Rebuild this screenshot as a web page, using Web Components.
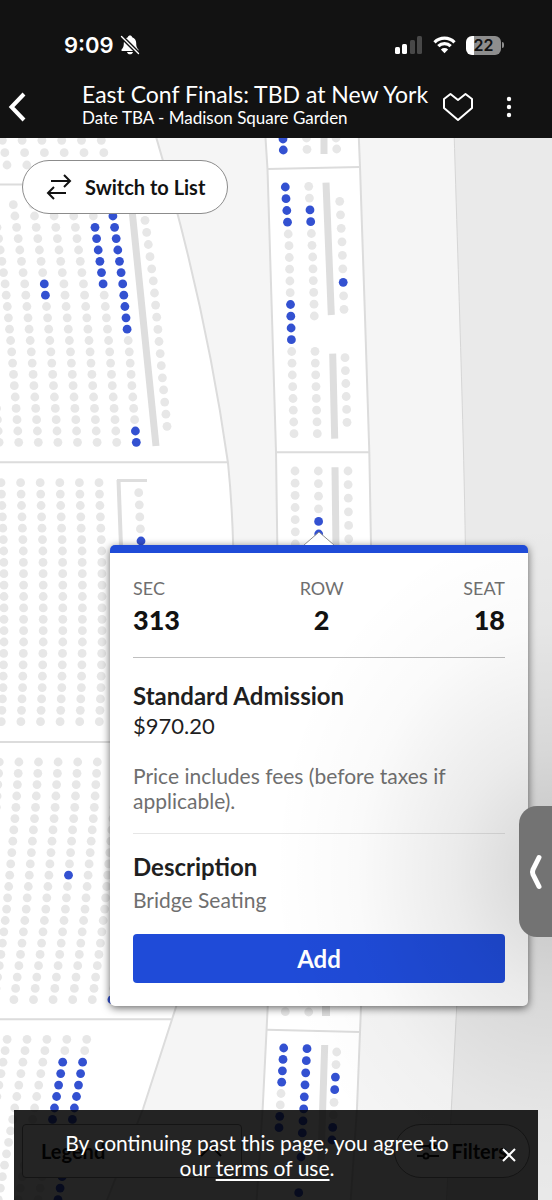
<!DOCTYPE html>
<html lang="en">
<head>
<meta charset="utf-8">
<meta name="viewport" content="width=device-width, initial-scale=1">
<title>East Conf Finals: TBD at New York</title>
<style>
    html, body {
        margin: 0;
        height: 100%;
    }
    body {
        font-family: Lato, "Open Sans", sans-serif;
        color: #1f1f1f;
        background: #121212;
    }
    ticket-app {
        min-height: 100%;
    }
</style>
</head>
<body>
<ticket-app></ticket-app>
<script>
class StatusBar extends HTMLElement {
    constructor() {
        super()
        this.attachShadow({ mode: "open" })
        this.render()
    }

    render() {
        this.shadowRoot.innerHTML = `
            <style>
                :host {
                    display: flex;
                    align-items: center;
                    justify-content: space-between;
                    padding: 30px 48px 16px 64px;
                    height: 30px;
                    color: #fff;
                    font-family: Inter, sans-serif;
                }
                div {
                    display: flex;
                    align-items: center;
                }
                #time {
                    gap: 6px;
                    font-size: 22px;
                    font-weight: 600;
                }
                #signals {
                    gap: 10px;
                }
                #battery {
                    justify-content: center;
                    width: 35px;
                    height: 19px;
                    border-radius: 6px;
                    background: linear-gradient(to right, #fff 8px, #8e8e8e 8px);
                    color: #121212;
                    font-size: 16px;
                    font-weight: 600;
                }
                #cap {
                    width: 2px;
                    height: 6px;
                    margin-left: 1px;
                    border-radius: 0 2px 2px 0;
                    background: #8e8e8e;
                }
                svg {
                    display: block;
                }
            </style>
            <div id="time">
                <span>9:09</span>
                <svg width="20" height="20" viewBox="0 0 20 20" fill="#fff">
                    <path d="M10 .5c1.100 0 1.900.7 2.200 1.700 2.700.9 4 3.200 4 5.800 0 4 1 5 2.200 6.500.5.7.2 1.500-.7 1.500H2.300c-.9 0-1.200-.8-.7-1.500C2.800 13 3.800 12 3.800 8c0-2.600 1.300-4.900 4-5.800C8.100 1.200 8.900.5 10 .5z"/>
                    <path d="M7 17h6c-.4 1.500-1.500 2.300-3 2.300S7.400 18.500 7 17z"/>
                    <path d="M1.500 1.500 18.500 18.500" stroke="#121212" stroke-width="4"/>
                    <path d="M1.500 1.500 18.500 18.500" stroke="#fff" stroke-width="1.400" stroke-linecap="round"/>
                </svg>
            </div>
            <div id="signals">
                <svg width="28" height="18" viewBox="0 0 28 18">
                    <rect x="0" y="11" width="5" height="7" rx="1.500" fill="#fff"/>
                    <rect x="7" y="8" width="5" height="10" rx="1.500" fill="#fff"/>
                    <rect x="15" y="4" width="5" height="14" rx="1.500" fill="#484848"/>
                    <rect x="22" y="0" width="5" height="18" rx="1.500" fill="#484848"/>
                </svg>
                <svg width="23" height="18" viewBox="0 0 23 18" fill="none" stroke="#fff" stroke-width="3.200">
                    <path d="M1.500 6.300a14.200 14.200 0 0 1 20 0"/>
                    <path d="M5.300 10.200a8.800 8.800 0 0 1 12.400 0"/>
                    <path d="M11.500 17.200 7.900 13.600a5.100 5.100 0 0 1 7.200 0z" fill="#fff" stroke="none"/>
                </svg>
                <div>
                    <div id="battery">22</div>
                    <div id="cap"></div>
                </div>
            </div>
        `
    }
}

class EventHeader extends HTMLElement {
    constructor() {
        super()
        this.attachShadow({ mode: "open" })
        this.render()
    }

    render() {
        this.shadowRoot.innerHTML = `
            <style>
                :host {
                    display: grid;
                    grid-template-columns: 82px 1fr 44px 58px;
                    align-items: center;
                    height: 62px;
                    padding-right: 14px;
                    color: #fff;
                }
                button {
                    display: flex;
                    align-items: center;
                    height: 48px;
                    padding: 0;
                    border: 0;
                    background: none;
                    cursor: pointer;
                }
                #back {
                    padding-left: 8px;
                }
                #save, #more {
                    justify-content: center;
                }
                #titles {
                    padding-bottom: 4px;
                }
                ::slotted(*) {
                    margin: 0;
                    font-weight: 400;
                    white-space: nowrap;
                }
                ::slotted(h1) {
                    font-size: 23px;
                    line-height: 26px;
                }
                ::slotted(p) {
                    font-size: 17px;
                    line-height: 22px;
                }
            </style>
            <button id="back" aria-label="Back">
                <svg width="20" height="30" viewBox="0 0 20 30" fill="none" stroke="#fff" stroke-width="4">
                    <path d="M16 2 3.500 15 16 28"/>
                </svg>
            </button>
            <div id="titles"><slot></slot></div>
            <button id="save" aria-label="Save event">
                <svg width="32" height="30" viewBox="0 0 32 30" fill="none" stroke="#fff" stroke-width="2" stroke-linejoin="round">
                    <path d="M8.500 2 2 7v9l14 12 14-12V7l-6.500-5L16 8z"/>
                </svg>
            </button>
            <button id="more" aria-label="More">
                <svg width="6" height="22" viewBox="0 0 6 22" fill="#fff">
                    <circle cx="3" cy="3" r="2.200"/>
                    <circle cx="3" cy="11" r="2.200"/>
                    <circle cx="3" cy="19" r="2.200"/>
                </svg>
            </button>
        `
    }
}

class SeatMap extends HTMLElement {
    // Each row: points it runs through, seat count, indexes of available seats.
    static rows = [
        // 300 level strip
        [[[283, 139], [283.3, 150]], 2, [0, 1]],
        [[[306.5, 138], [307, 149.3]], 2, []],
        [[[336, 138], [336.7, 149]], 2, []],
        [[[285.3, 187], [289, 246], [292, 363], [294, 433.7]], 22, [0, 1, 2, 3, 10, 11, 12, 13]],
        [[[308.7, 186.3], [312.7, 257], [314.3, 316]], 12, [2, 3]],
        [[[315, 351.3], [317.3, 433.7]], 8, []],
        [[[339.7, 201.3], [342, 242], [344, 309.3]], 9, [6]],
        [[[345, 357.7], [347, 422.3]], 6, []],
        [[[295, 471], [295.3, 544]], 7, []],
        [[[318.3, 471], [318.7, 534]], 6, [4, 5]],
        [[[348, 471], [348.7, 539]], 6, []],
        [[[285.3, 1011.7], [285.3, 1011.7]], 1, []],
        [[[308.7, 1012], [308.7, 1012]], 1, []],
        [[[283.7, 1048], [279, 1127.7]], 8, [0, 1, 2, 3, 6, 7]],
        [[[307, 1048.7], [301, 1157]], 10, [0, 1, 2, 3, 4, 5, 6, 7, 9]],
        [[[336.7, 1052], [332, 1140]], 8, [2, 3, 6, 7]],
        [[[298.7, 1192.7], [298.7, 1192.7]], 1, [0]],
        // outer columns of the 200 level
        [[[145, 220.3], [153.3, 280.7], [167, 426.3]], 18, []],
        [[[138.7, 492.7], [141, 541]], 5, [4]]
    ]

    static bars = [
        [131, 200, 156, 446, 7],
        [324, 138, 324, 154, 7],
        [326, 182.7, 331.3, 315, 7],
        [332.7, 353.7, 334.7, 438.7, 7],
        [335, 467.3, 336, 548, 7],
        [326, 1000, 326, 1016, 8],
        [324.7, 1045, 321, 1160, 7],
        [118.5, 480, 121.5, 560, 4],
        [117, 480.5, 147, 480.5, 3]
    ]

    constructor() {
        super()
        this.attachShadow({ mode: "open" })
        this.render()
    }

    // Rows of one block share a curve and differ only by their x offset
    static block(points, count, pitch, offsets, available = {}) {
        return offsets.map(n => [
            points.map(([x, y]) => [x + n * pitch, y]),
            count,
            available[n] ?? []
        ])
    }

    get allRows() {
        return [
            ...SeatMap.rows,
            ...SeatMap.block([[101.3, 140.3], [103.7, 152.3], [106, 165]], 3, 19.8, [-5, -4, -3, -2, -1, 0]),
            ...SeatMap.block(
                [[111.3, 204.7], [122.7, 283.7], [129.3, 351.7], [136.3, 442.3]], 22, 19.6,
                [-7, -6, -5, -4, -3, -2, -1, 0],
                {
                    "0": [1, 2, 3, 4, 5, 6, 7, 8, 9, 10, 11, 20, 21],
                    "-1": [2, 3, 4, 5, 6, 7],
                    "-4": [7, 8],
                }
            ),
            ...SeatMap.block(
                [[99, 482.7], [101.7, 550], [102, 585], [102, 640], [101, 687], [99.3, 721.7]], 22, 19.6,
                [-5, -4, -3, -2, -1, 0]
            ),
            ...SeatMap.block(
                [[97.3, 762], [94.3, 807.3], [85, 909.3], [79.3, 954.7], [72.7, 999.7]], 22, 19.6,
                [-5, -4, -3, -2, -1, 0, 1, 2],
                { "-1": [10], "2": [21] }
            ),
            ...SeatMap.block(
                [[86.7, 1039.3], [56, 1211]], 16, 19.9,
                [-4, -3, -2, -1, 0],
                { "0": [2, 3, 4, 5, 6, 7, 12, 13, 14], "-1": [2, 3, 4, 5, 6, 7] }
            )
        ]
    }

    placeSeats([points, count, available]) {
        const top = points[0][1]
        const bottom = points[points.length - 1][1]
        const seats = []
        for (let i = 0; i < count; i++) {
            const y = count > 1 ? top + (bottom - top) * i / (count - 1) : top
            let k = 1
            while (k < points.length - 1 && points[k][1] < y) k++
            const [x0, y0] = points[k - 1]
            const [x1, y1] = points[k]
            const x = y1 === y0 ? x0 : x0 + (x1 - x0) * (y - y0) / (y1 - y0)
            const cls = available.includes(i) ? "open" : "taken"
            seats.push(`<circle class="${cls}" cx="${x.toFixed(1)}" cy="${y.toFixed(1)}" r="4.4"/>`)
        }
        return seats.join("")
    }

    render() {
        const seats = this.allRows.map(row => this.placeSeats(row)).join("")
        const bars = SeatMap.bars.map(([x1, y1, x2, y2, w]) =>
            `<line x1="${x1}" y1="${y1}" x2="${x2}" y2="${y2}" stroke-width="${w}"/>`
        ).join("")
        this.shadowRoot.innerHTML = `
            <style>
                :host {
                    display: block;
                    background: #f5f5f5;
                }
                svg {
                    display: block;
                    width: 100%;
                    height: 100%;
                }
                .floor {
                    fill: #fff;
                    stroke: #dcdcdc;
                    stroke-width: 2px;
                }
                .outer {
                    fill: #eaeaea;
                    stroke: #d6d6d6;
                }
                .bars {
                    stroke: #dedede;
                }
                .taken {
                    fill: #e7e7e7;
                }
                .open {
                    fill: #3351d1;
                }
            </style>
            <svg viewBox="0 138 552 1062" preserveAspectRatio="xMinYMin slice" role="img" aria-label="Seat map">
                <path class="outer" d="M454 130 C460 330 465 470 466 600 C467 760 464 880 456.7 1007 L446 1210 H1400 V130z"/>
                <path class="floor" d="M-5 130 H154 Q205 300 228 463 C243 610 230 850 176 1007 L143 1109 L103 1210 H-5z"/>
                <path class="floor" d="M265 130 L267.5 169 L272 317 L276 452 L277.3 545 C279 740 277 840 267.7 1007 L262.7 1108 L256 1210 H350 L357 1108 L361 1007 C371 840 373 740 371 545 L369.3 452 L365 317 L360 167 L358.5 130z"/>
                <path class="floor" d="M-5 184.5 H171 M-5 462.3 H228 M-5 742 H232 M-5 1019.3 H171.5 M267.5 169 L360 167 M276 452.3 H369.3 M267 1029.7 L360 1032"/>
                <g class="bars">${bars}</g>
                ${seats}
            </svg>
        `
    }
}

class MapButton extends HTMLElement {
    constructor() {
        super()
        this.attachShadow({ mode: "open" })
        this.render()
    }

    render() {
        this.shadowRoot.innerHTML = `
            <style>
                :host {
                    display: flex;
                }
                button {
                    display: flex;
                    flex: 1;
                    align-items: center;
                    gap: 12px;
                    height: 54px;
                    padding: 0 22px;
                    border: 1px solid #8c8c8c;
                    border-radius: 27px;
                    background: #fff;
                    color: #121212;
                    font: inherit;
                    font-size: 20px;
                    font-weight: 700;
                    white-space: nowrap;
                    cursor: pointer;
                }
                :host([square]) button {
                    flex-direction: row-reverse;
                    justify-content: space-between;
                    padding: 0 18px;
                    border-radius: 4px;
                }
            </style>
            <button><slot name="icon"></slot><span><slot></slot></span></button>
        `
    }
}

class SeatPopup extends HTMLElement {
    constructor() {
        super()
        this.attachShadow({ mode: "open" })
        this.render()
    }

    render() {
        this.shadowRoot.innerHTML = `
            <style>
                :host {
                    display: block;
                    padding: 23px;
                    border-top: 8px solid #1f4bd8;
                    border-radius: 5px;
                    background: #fff;
                    box-shadow: 0 2px 8px rgba(0, 0, 0, .6);
                }
                #pointer {
                    position: absolute;
                    bottom: 100%;
                    left: 194px;
                    margin-bottom: 8px;
                }
                dl {
                    display: flex;
                    justify-content: space-between;
                    margin: 0;
                    padding-bottom: 18px;
                    border-bottom: 1px solid #bfbfbf;
                    text-align: center;
                }
                dl div:first-child {
                    text-align: left;
                }
                dl div:last-child {
                    text-align: right;
                }
                dt {
                    color: #6f6f6f;
                    font-size: 18px;
                    line-height: 25px;
                }
                dd {
                    margin: 0;
                    color: #121212;
                    font-size: 27px;
                    font-weight: 900;
                    line-height: 38px;
                }
                h2 {
                    margin: 0;
                    font-size: 24px;
                    font-weight: 700;
                    line-height: 30px;
                }
                p {
                    margin: 0;
                    color: #6f6f6f;
                    font-size: 21px;
                    line-height: 25px;
                }
                #offer {
                    padding: 23px 0 20px;
                    border-bottom: 1px solid #e6e6e6;
                }
                #price {
                    margin-bottom: 22px;
                    color: #1f1f1f;
                    font-size: 22px;
                    line-height: 30px;
                }
                #description {
                    display: grid;
                    gap: 5px;
                    padding: 18px 0 22px;
                }
                button {
                    display: block;
                    width: 100%;
                    height: 49px;
                    border: 0;
                    border-radius: 4px;
                    background: #1f4bd8;
                    color: #fff;
                    font: inherit;
                    font-size: 24px;
                    font-weight: 700;
                    cursor: pointer;
                }
            </style>
            <svg id="pointer" width="30" height="14" viewBox="0 0 30 14">
                <path d="M0 14 15 1l15 13z" fill="#fff"/>
                <path d="M0 14 15 1l15 13" fill="none" stroke="#8c8c8c"/>
            </svg>
            <dl>
                <div><dt>SEC</dt><dd><slot name="section"></slot></dd></div>
                <div><dt>ROW</dt><dd><slot name="row"></slot></dd></div>
                <div><dt>SEAT</dt><dd><slot name="seat"></slot></dd></div>
            </dl>
            <div id="offer">
                <h2><slot name="offer"></slot></h2>
                <p id="price"><slot name="price"></slot></p>
                <p>Price includes fees (before taxes if applicable).</p>
            </div>
            <div id="description">
                <h2>Description</h2>
                <p><slot name="description"></slot></p>
            </div>
            <button>Add</button>
        `
    }
}

class SideHandle extends HTMLElement {
    constructor() {
        super()
        this.attachShadow({ mode: "open" })
        this.render()
    }

    render() {
        this.shadowRoot.innerHTML = `
            <style>
                :host {
                    display: block;
                }
                button {
                    display: flex;
                    align-items: center;
                    justify-content: center;
                    width: 33px;
                    height: 131px;
                    padding: 0;
                    border: 0;
                    border-radius: 18px 0 0 18px;
                    background: #737373;
                }
            </style>
            <button aria-label="Show window">
                <svg width="16" height="38" viewBox="0 0 16 38" fill="none" stroke="#fff" stroke-width="5" stroke-linecap="round" stroke-linejoin="round">
                    <path d="M11 4.500 5 16.500Q4 19 5 21.500L11 33.500"/>
                </svg>
            </button>
        `
    }
}

class TermsBanner extends HTMLElement {
    constructor() {
        super()
        this.attachShadow({ mode: "open" })
        this.render()
    }

    render() {
        this.shadowRoot.innerHTML = `
            <style>
                :host {
                    display: grid;
                    grid-template-columns: 1fr 58px;
                    align-items: center;
                    padding-left: 20px;
                    height: 90px;
                    background: rgba(0, 0, 0, .86);
                    color: #fff;
                }
                p {
                    margin: 0;
                    padding: 0 28px;
                    font-size: 21px;
                    line-height: 25px;
                    text-align: center;
                }
                a {
                    color: inherit;
                    text-underline-offset: 3px;
                }
                button {
                    display: flex;
                    align-items: center;
                    justify-content: center;
                    height: 48px;
                    padding: 0;
                    border: 0;
                    background: none;
                    cursor: pointer;
                }
            </style>
            <p>By continuing past this page, you agree to our <a href="#terms">terms of use</a>.</p>
            <button aria-label="Close">
                <svg width="14" height="14" viewBox="0 0 14 14" stroke="#fff" stroke-width="2">
                    <path d="M1 1l12 12M13 1 1 13"/>
                </svg>
            </button>
        `
    }
}

class TicketApp extends HTMLElement {
    constructor() {
        super()
        this.attachShadow({ mode: "open" })
        this.render()
    }

    render() {
        this.shadowRoot.innerHTML = `
            <style>
                :host {
                    display: flex;
                    flex-direction: column;
                }
                main {
                    display: grid;
                    flex: 1;
                    position: relative;
                    overflow: hidden;
                }
                seat-map {
                    position: absolute;
                    inset: 0;
                }
                #list {
                    position: absolute;
                    top: 22px;
                    left: 22px;
                }
                seat-popup {
                    position: absolute;
                    top: 407px;
                    left: 110px;
                    right: 24px;
                }
                #tools {
                    display: flex;
                    justify-content: space-between;
                    position: absolute;
                    bottom: 22px;
                    left: 22px;
                    right: 22px;
                }
                #legend {
                    width: 220px;
                }
                terms-banner {
                    position: absolute;
                    bottom: 0;
                    left: 14px;
                    right: 14px;
                }
                #shade {
                    position: absolute;
                    inset: 0;
                    background: radial-gradient(280px 350px at 100% 734px, rgba(0, 0, 0, .17), rgba(0, 0, 0, .08) 35%, rgba(0, 0, 0, .02) 70%, transparent);
                    pointer-events: none;
                }
                side-handle {
                    position: absolute;
                    top: 668px;
                    right: 0;
                }
            </style>
            <status-bar></status-bar>
            <event-header>
                <h1>East Conf Finals: TBD at New York</h1>
                <p>Date TBA - Madison Square Garden</p>
            </event-header>
            <main>
                <seat-map></seat-map>
                <map-button id="list">
                    <svg slot="icon" width="28" height="26" viewBox="0 0 28 26" fill="none" stroke="#121212" stroke-width="2">
                        <path d="M6 7h19M19 1l6 6-6 6M21 19H3M9 13l-6 6 6 6"/>
                    </svg>
                    Switch to List
                </map-button>
                <div id="tools">
                    <map-button id="legend" square>
                        <svg slot="icon" width="24" height="24" viewBox="0 0 24 24" fill="none" stroke="#121212" stroke-width="2">
                            <path d="M2 17 12 7l10 10"/>
                        </svg>
                        Legend
                    </map-button>
                    <map-button>
                        <svg slot="icon" width="22" height="20" viewBox="0 0 22 20" fill="none" stroke="#121212" stroke-width="2">
                            <path d="M0 5h12M18 5h4M0 15h6M12 15h10"/>
                            <circle cx="15" cy="5" r="2.500"/>
                            <circle cx="9" cy="15" r="2.500"/>
                        </svg>
                        Filters
                    </map-button>
                </div>
                <seat-popup>
                    <span slot="section">313</span>
                    <span slot="row">2</span>
                    <span slot="seat">18</span>
                    <span slot="offer">Standard Admission</span>
                    <span slot="price">$970.20</span>
                    <span slot="description">Bridge Seating</span>
                </seat-popup>
                <div id="shade"></div>
                <terms-banner></terms-banner>
                <side-handle></side-handle>
            </main>
        `
    }
}


window.customElements.define("status-bar", StatusBar)
window.customElements.define("event-header", EventHeader)
window.customElements.define("seat-map", SeatMap)
window.customElements.define("map-button", MapButton)
window.customElements.define("seat-popup", SeatPopup)
window.customElements.define("side-handle", SideHandle)
window.customElements.define("terms-banner", TermsBanner)
window.customElements.define("ticket-app", TicketApp)
</script>
</body>
</html>
